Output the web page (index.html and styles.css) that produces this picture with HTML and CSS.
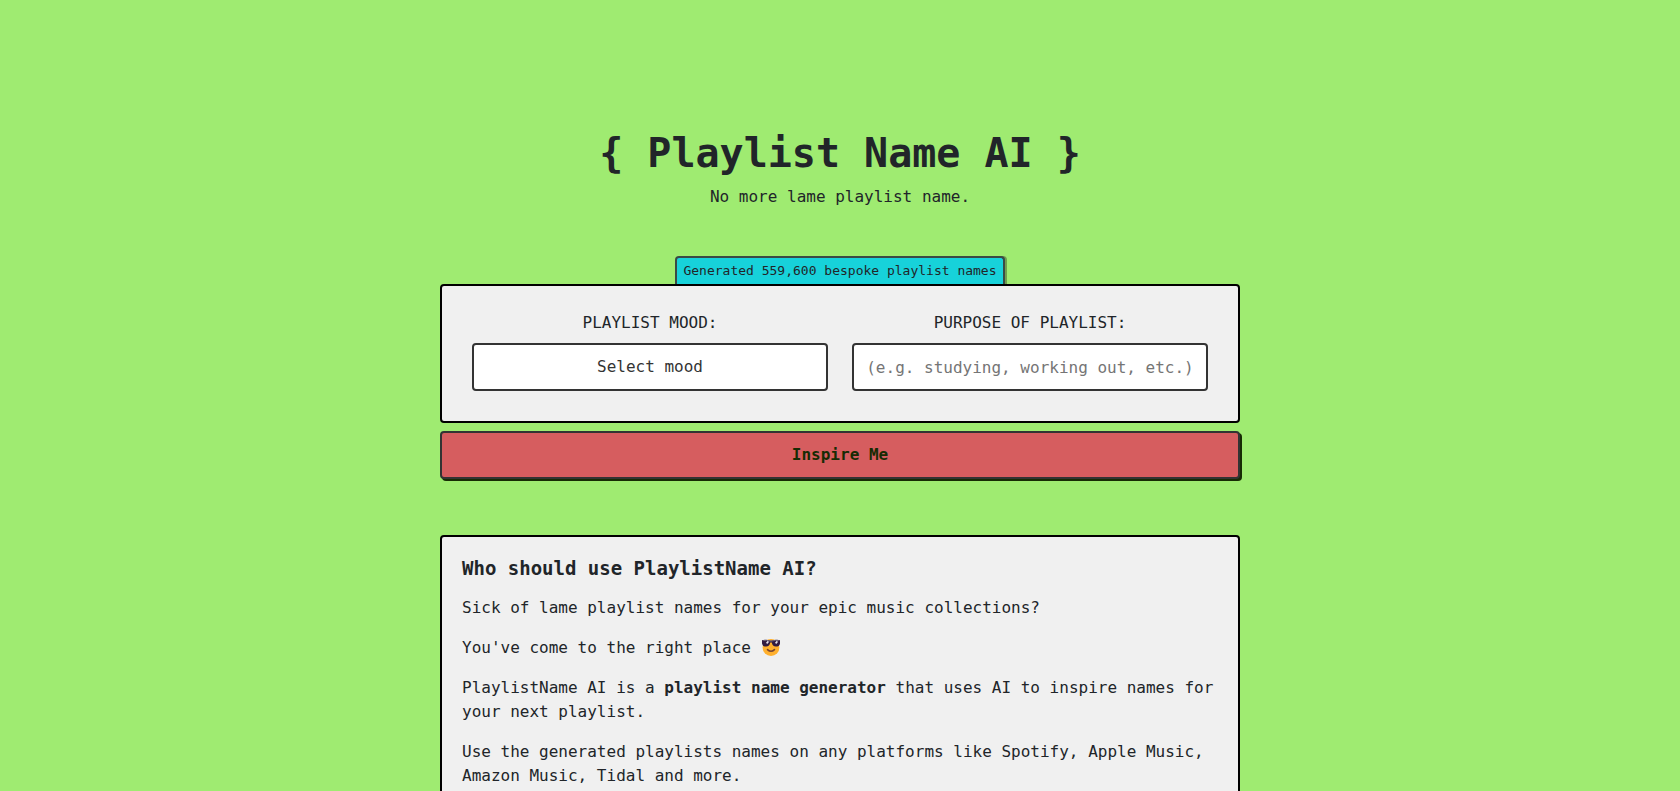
FILE: index.html
```html
<!DOCTYPE html>
<html lang="en">
<head>
  <meta charset="utf-8">
  <meta name="viewport" content="width=device-width, initial-scale=1">
  <title>Playlist Name AI</title>
  <link rel="stylesheet" href="styles.css">
</head>
<body>
  <main class="container">
    <header class="header">
      <h1>{ Playlist Name AI }</h1>
      <p>No more lame playlist name.</p>
    </header>

    <form class="generator">
      <div class="badge">Generated 559,600 bespoke playlist names</div>
      <div class="card fields">
        <div class="field">
          <label for="mood">PLAYLIST MOOD:</label>
          <select id="mood" class="input">
            <option value="">Select mood</option>
          </select>
        </div>
        <div class="field">
          <label for="purpose">PURPOSE OF PLAYLIST:</label>
          <input type="text" id="purpose" class="input" placeholder="(e.g. studying, working out, etc.)">
        </div>
      </div>
      <button type="submit" class="submit-btn">Inspire Me</button>
    </form>

    <section class="card about">
      <h2>Who should use PlaylistName AI?</h2>
      <p>Sick of lame playlist names for your epic music collections?</p>
      <p>You've come to the right place
        <svg class="emoji" viewBox="0 0 20 20" aria-hidden="true">
          <circle cx="10" cy="10.5" r="8.4" fill="#ffb02e"/>
          <path d="M6.5 12.6Q10 16 13.5 12.6" fill="none" stroke="#7a4631" stroke-width="1.5" stroke-linecap="round"/>
          <path d="M1 3.2Q4 2 10 3.8Q16 2 19 3.2V6.4Q18.4 9.6 14.8 9.6Q11.4 9.6 10.8 5.6H9.2Q8.6 9.6 5.2 9.6Q1.6 9.6 1 6.4Z" fill="#321b41"/>
          <path d="M2.2 3.6Q5 2.8 10 4.2Q15 2.8 17.8 3.6" fill="none" stroke="#6f6478" stroke-width="1"/>
          <path d="M5.6 6.4L7.4 4.4M14.6 6.4L16.4 4.4" stroke="#e4dfe8" stroke-width="1.6"/>
        </svg>
      </p>
      <p>PlaylistName AI is a <strong>playlist name generator</strong> that uses AI to inspire names for your next playlist.</p>
      <p>Use the generated playlists names on any platforms like Spotify, Apple Music, Amazon Music, Tidal and more.</p>
    </section>
  </main>
</body>
</html>
```

FILE: styles.css
```css
* {
  box-sizing: border-box;
}

body {
  margin: 0;
  background-color: #9feb71;
  color: #212529;
  font-family: "DejaVu Sans Mono", monospace;
  font-size: 16px;
  line-height: 24px;
}

h1, h2, p {
  margin: 0;
}

.container {
  max-width: 800px;
  margin: 0 auto;
  padding: 129px 0 48px;
}

.header {
  margin-bottom: 47px;
  text-align: center;
}

.header h1 {
  margin-bottom: 8px;
  font-size: 40px;
  line-height: 48px;
}

.generator {
  display: flex;
  flex-direction: column;
  align-items: center;
  margin-bottom: 56px;
}

.badge {
  padding: 2px 6px;
  background-color: #17d2da;
  border: 2px solid #3b4a45;
  border-bottom: none;
  border-radius: 4px 4px 0 0;
  box-shadow: 2px 0 0 #6f9f50;
  font-size: 13px;
  line-height: 22px;
}

.card {
  width: 100%;
  background-color: #f0f0f0;
  border: 2px solid #000;
  border-radius: 4px;
}

.fields {
  display: grid;
  grid-template-columns: 1fr 1fr;
  gap: 24px;
  margin-bottom: 8px;
  padding: 25px 30px 30px;
}

.field label {
  display: block;
  margin-bottom: 8px;
  text-align: center;
}

.input {
  display: block;
  width: 100%;
  height: 48px;
  padding: 0 12px;
  background-color: #fff;
  border: 2px solid #333;
  border-radius: 4px;
  color: #333;
  font: inherit;
  text-align: center;
  text-align-last: center;
  appearance: none;
}

.input::placeholder {
  color: #757575;
  opacity: 1;
}

.submit-btn {
  width: 100%;
  height: 48px;
  background-color: #d65d5f;
  border: 2px solid #333;
  border-radius: 4px;
  box-shadow: 2px 2px 0 #172b04;
  color: #172b04;
  font: inherit;
  font-weight: bold;
  cursor: pointer;
}

.about {
  padding: 19px 20px 4px;
}

.about h2 {
  margin-bottom: 16px;
  font-size: 19px;
  line-height: 24px;
}

.about p {
  margin-bottom: 16px;
}

.emoji {
  width: 20px;
  height: 20px;
  vertical-align: -4px;
}
```
